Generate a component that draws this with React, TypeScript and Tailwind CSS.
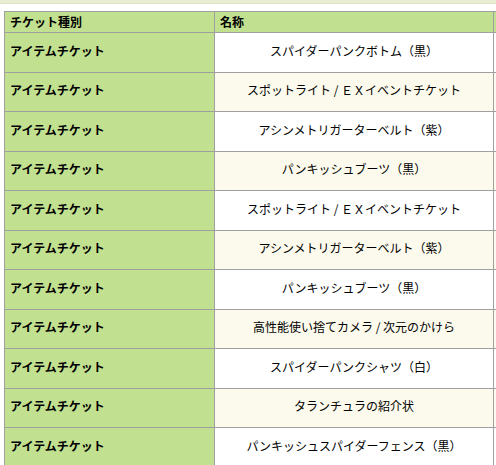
const rows = [
  "スパイダーパンクボトム（黒）",
  "スポットライト / ＥＸイベントチケット",
  "アシンメトリガーターベルト（紫）",
  "パンキッシュブーツ（黒）",
  "スポットライト / ＥＸイベントチケット",
  "アシンメトリガーターベルト（紫）",
  "パンキッシュブーツ（黒）",
  "高性能使い捨てカメラ / 次元のかけら",
  "スパイダーパンクシャツ（白）",
  "タランチュラの紹介状",
  "パンキッシュスパイダーフェンス（黒）",
]

export default function App() {
  return (
    <div
      className="w-[496px] h-[465px] overflow-hidden bg-white text-black"
      style={{ fontFamily: '"Noto Sans CJK JP", "Noto Sans", sans-serif' }}
    >
      {/* band from the section above */}
      <div className="h-[4px] bg-[#e9edd2] border-b border-[#dde2c2]" />

      <div className="pl-[4px] pt-[7px]">
        <table className="table-fixed border-collapse w-[600px] text-[12px] leading-[16px]">
          <colgroup>
            <col className="w-[210px]" />
            <col className="w-[279px]" />
            <col />
          </colgroup>
          <thead>
            <tr className="h-[21px] bg-[#c2e190]">
              <th className="border border-[#a0a0a0] px-[5px] py-0 text-left font-bold">チケット種別</th>
              <th className="border border-[#a0a0a0] px-[5px] py-0 text-left font-bold">名称</th>
              <th className="border border-[#a0a0a0] px-[5px] py-0 text-left font-bold">&nbsp;</th>
            </tr>
          </thead>
          <tbody>
            {rows.map((name, i) => (
              <tr key={i} className={i % 2 === 0 ? "h-[39.5px] bg-white" : "h-[39.5px] bg-[#fcfaec]"}>
                <td className="border border-[#a0a0a0] bg-[#c2e190] px-[5px] pb-[3px] font-bold">アイテムチケット</td>
                <td className="border border-[#a0a0a0] px-[5px] pb-[3px] text-center">{name}</td>
                <td className="border border-[#a0a0a0] px-[5px] pb-[3px]">&nbsp;</td>
              </tr>
            ))}
          </tbody>
        </table>
      </div>
    </div>
  )
}
